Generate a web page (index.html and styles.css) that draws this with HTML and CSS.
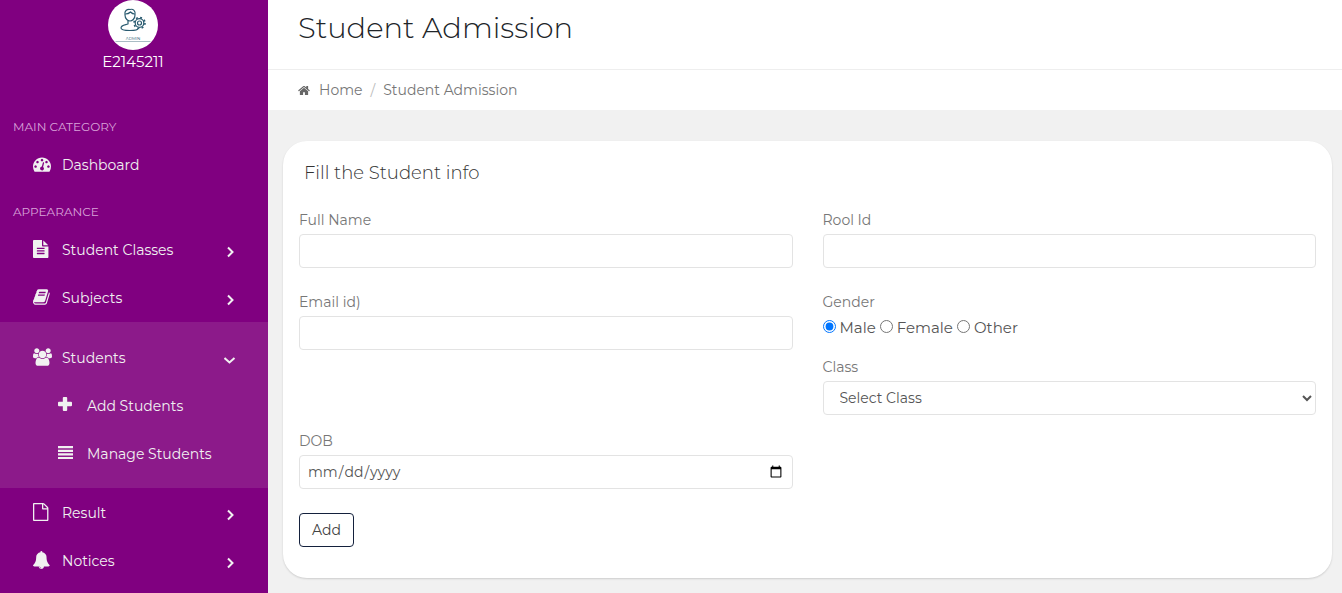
FILE: index.html
```html
<!DOCTYPE html>
<html lang="en">
<head>
<meta charset="utf-8">
<meta name="viewport" content="width=device-width, initial-scale=1">
<title>Student Admission</title>
<link rel="stylesheet" href="styles.css">
</head>
<body>
<div class="layout">
  <aside class="sidebar">
    <div class="profile">
      <svg class="avatar" viewBox="0 0 50 50" role="img" aria-label="Admin">
        <circle cx="25" cy="25" r="25" fill="#fff"/>
        <g fill="none" stroke="#2a5b70" stroke-width="1.2" stroke-linecap="round" stroke-linejoin="round">
          <path d="M17 15c-1-4 2-6 5-5.500 3-1 6 1.500 5 5.500 0 4-3 6-5 6s-5-2-5-6z"/>
          <path d="M17.500 14c2 0 4-1 5-2 1 1 2 2 4 2"/>
          <path d="M20 21v3c-3 1-7 1-7 4 0 2 4 2.500 9 2.500 4 0 8 0 8-2"/>
          <circle cx="31.500" cy="23" r="4.300"/>
          <circle cx="31.500" cy="23" r="2"/>
          <circle cx="31.500" cy="23" r="5.500" stroke-width="1.600" stroke-dasharray="1.900 2.420" stroke-linecap="butt"/>
        </g>
        <text class="avatar-text" x="25" y="40" text-anchor="middle">ADMIN</text>
        <path d="M7.500 41.500h35" stroke="#a9bcc4" stroke-width="1"/>
      </svg>
      <div class="profile-name">E2145211</div>
    </div>
    <nav class="menu" aria-label="Main">
      <h2 class="menu-title">MAIN CATEGORY</h2>
      <a class="item" href="#">
        <svg class="icon" viewBox="0 0 1792 1792"><path d="M384 1152q0-53-37.500-90.500t-90.500-37.500-90.500 37.500-37.500 90.500 37.500 90.500 90.500 37.500 90.500-37.500 37.500-90.500zm192-448q0-53-37.500-90.500t-90.500-37.500-90.500 37.500-37.500 90.500 37.500 90.500 90.500 37.500 90.500-37.500 37.500-90.500zm428 481l101-382q6-26-7.500-48.500t-38.500-29.500-48 6.500-30 39.500l-101 382q-60 5-107 43.500t-63 98.500q-20 77 20 146t117 89 146-20 89-117q16-60-6-117t-72-91zm660-33q0-53-37.500-90.500t-90.500-37.500-90.500 37.500-37.500 90.500 37.500 90.500 90.500 37.500 90.500-37.500 37.500-90.500zm-640-640q0-53-37.500-90.500t-90.500-37.500-90.500 37.500-37.500 90.500 37.500 90.500 90.500 37.500 90.500-37.500 37.500-90.500zm448 192q0-53-37.500-90.500t-90.500-37.500-90.500 37.500-37.500 90.500 37.500 90.500 90.500 37.500 90.500-37.500 37.500-90.500zm320 448q0 261-141 483-19 29-54 29h-1402q-35 0-54-29-141-221-141-483 0-182 71-348t191-286 286-191 348-71 348 71 286 191 191 286 71 348z"/></svg>
        <span>Dashboard</span>
      </a>
      <h2 class="menu-title">APPEARANCE</h2>
      <a class="item" href="#">
        <svg class="icon" viewBox="128 0 1792 1792"><path d="M1596 476q14 14 28 36h-472v-472q22 14 36 28zm-476 164h544v1056q0 40-28 68t-68 28h-1344q-40 0-68-28t-28-68v-1600q0-40 28-68t68-28h800v544q0 40 28 68t68 28zm160 736v-64q0-14-9-23t-23-9h-704q-14 0-23 9t-9 23v64q0 14 9 23t23 9h704q14 0 23-9t9-23zm0-256v-64q0-14-9-23t-23-9h-704q-14 0-23 9t-9 23v64q0 14 9 23t23 9h704q14 0 23-9t9-23zm0-256v-64q0-14-9-23t-23-9h-704q-14 0-23 9t-9 23v64q0 14 9 23t23 9h704q14 0 23-9t9-23z"/></svg>
        <span>Student Classes</span>
        <svg class="chevron" viewBox="0 0 12 12"><path d="M4 1.500 8.500 6 4 10.500"/></svg>
      </a>
      <a class="item" href="#">
        <svg class="icon" viewBox="64 0 1792 1792"><path d="M1703 478q40 57 18 129l-275 906q-19 64-76.500 107.500t-122.500 43.500h-923q-77 0-148.500-53.500t-99.500-131.500q-24-67-2-127 0-4 3-27t4-37q1-8-3-21.500t-3-19.500q2-11 8-21t16.500-23.500 16.500-23.500q23-38 45-91.500t30-91.500q3-10 .5-30t-.5-28q3-11 17-28t17-23q21-36 42-92t25-90q1-9-2.500-32t.5-28q4-13 22-30.500t22-22.500q19-26 42.500-84.500t27.500-96.500q1-8-3-25.500t-2-26.500q2-8 9-18t18-23 17-21q8-12 16.500-30.500t15-35 16-36 19.500-32 26.500-23.500 36-11.500 47.500 5.500l-1 3q38-9 51-9h761q74 0 114 56t18 130l-274 906q-36 119-71.500 153.500t-128.500 34.500h-869q-27 0-38 15-11 16-1 43 24 70 144 70h923q29 0 56-15.500t35-41.500l300-987q7-22 5-57 38 15 59 43zm-1064 2q-4 13 2 22.500t20 9.500h608q13 0 25.500-9.500t16.500-22.500l21-64q4-13-2-22.500t-20-9.500h-608q-13 0-25.500 9.500t-16.500 22.500zm-83 256q-4 13 2 22.500t20 9.500h608q13 0 25.500-9.500t16.500-22.500l21-64q4-13-2-22.500t-20-9.500h-608q-13 0-25.500 9.500t-16.500 22.500z"/></svg>
        <span>Subjects</span>
        <svg class="chevron" viewBox="0 0 12 12"><path d="M4 1.500 8.500 6 4 10.500"/></svg>
      </a>
      <div class="group">
        <a class="item" href="#">
          <svg class="icon icon-wide" viewBox="0 0 1920 1792"><path d="M593 896q-162 5-265 128h-134q-82 0-138-40.500t-56-118.500q0-353 124-353 6 0 43.500 21t97.500 42.500 119 21.500q67 0 133-23-5 37-5 66 0 139 81 256zm1071 637q0 120-73 189.500t-194 69.500h-874q-121 0-194-69.500t-73-189.500q0-53 3.500-103.500t14-109 26.500-108.500 43-97.500 62-81 85.500-53.500 111.500-20q10 0 43 21.500t73 48 107 48 135 21.500 135-21.500 107-48 73-48 43-21.500q61 0 111.500 20t85.500 53.500 62 81 43 97.500 26.500 108.500 14 109 3.500 103.500zm-1024-1277q0 106-75 181t-181 75-181-75-75-181 75-181 181-75 181 75 75 181zm704 384q0 159-112.500 271.500t-271.500 112.500-271.500-112.500-112.500-271.500 112.500-271.500 271.500-112.500 271.500 112.500 112.500 271.500zm576 225q0 78-56 118.500t-138 40.500h-134q-103-123-265-128 81-117 81-256 0-29-5-66 66 23 133 23 59 0 119-21.500t97.500-42.500 43.500-21q124 0 124 353zm-128-609q0 106-75 181t-181 75-181-75-75-181 75-181 181-75 181 75 75 181z"/></svg>
          <span>Students</span>
          <svg class="chevron" viewBox="0 0 12 12"><path d="M.5 4 5.500 8.500 10.500 4"/></svg>
        </a>
        <a class="item subitem" href="#">
          <svg class="icon" viewBox="0 0 18 18"><path d="M5.800 1h2.400q1 0 1 1v3.800H13q1 0 1 1v2.400q0 1-1 1H9.200V14q0 1-1 1H5.800q-1 0-1-1v-3.800H1q-1 0-1-1V6.800q0-1 1-1h3.800V2q0-1 1-1z"/></svg>
          <span>Add Students</span>
        </a>
        <a class="item subitem" href="#">
          <svg class="icon" viewBox="0 0 18 18"><path d="M0 2h15v2.200H0zM0 5.700h15v2.200H0zM0 9.300h15v2.200H0zM0 12.900h15v2.200H0z"/></svg>
          <span>Manage Students</span>
        </a>
      </div>
      <a class="item" href="#">
        <svg class="icon" viewBox="128 0 1792 1792"><path d="M1596 380q28 28 48 76t20 88v1152q0 40-28 68t-68 28h-1344q-40 0-68-28t-28-68v-1600q0-40 28-68t68-28h896q40 0 88 20t76 48zm-444-244v376h376q-10-29-22-41l-313-313q-12-12-41-22zm384 1528v-1024h-416q-40 0-68-28t-28-68v-416h-768v1536h1280z"/></svg>
        <span>Result</span>
        <svg class="chevron" viewBox="0 0 12 12"><path d="M4 1.500 8.500 6 4 10.500"/></svg>
      </a>
      <a class="item" href="#">
        <svg class="icon" viewBox="64 0 1792 1792"><path d="M912 1696q0-16-16-16-59 0-101.500-42.500t-42.500-101.500q0-16-16-16t-16 16q0 73 51.500 124.500t124.500 51.500q16 0 16-16zm816-288q0 52-38 90t-90 38h-448q0 106-75 181t-181 75-181-75-75-181h-448q-52 0-90-38t-38-90q50-42 91-88t85-119.500 74.500-158.500 50-206 19.500-260q0-152 117-282.500t307-158.500q-8-19-8-39 0-40 28-68t68-28 68 28 28 68q0 20-8 39 190 28 307 158.500t117 282.500q0 139 19.500 260t50 206 74.500 158.500 85 119.500 91 88z"/></svg>
        <span>Notices</span>
        <svg class="chevron" viewBox="0 0 12 12"><path d="M4 1.500 8.500 6 4 10.500"/></svg>
      </a>
    </nav>
  </aside>

  <main class="main">
    <header class="page-head">
      <h1 class="page-title">Student Admission</h1>
    </header>
    <nav class="crumbs" aria-label="Breadcrumb">
      <a class="crumb-home" href="#">
        <svg class="home-icon" viewBox="64 128 1664 1536"><path d="M1472 992v480q0 26-19 45t-45 19h-384v-384h-256v384h-384q-26 0-45-19t-19-45v-480q0-1 .5-3t.5-3l575-474 575 474q1 2 1 6zm223-69l-62 74q-8 9-21 11h-3q-13 0-21-7l-692-577-692 577q-12 8-24 7-13-2-21-11l-62-74q-8-10-7-23.500t11-21.500l719-599q32-26 76-26t76 26l244 204v-195q0-14 9-23t23-9h192q14 0 23 9t9 23v408l219 182q10 8 11 21.500t-7 23.500z"/></svg>
        <span>Home</span>
      </a>
      <span class="crumb-sep">/</span>
      <span>Student Admission</span>
    </nav>

    <section class="card">
      <h2 class="card-title">Fill the Student info</h2>
      <form>
        <div class="row">
          <div class="field">
            <label class="label" for="fullname">Full Name</label>
            <input class="control" id="fullname" type="text">
          </div>
          <div class="field">
            <label class="label" for="roll">Rool Id</label>
            <input class="control" id="roll" type="text">
          </div>
        </div>
        <div class="row row-tight">
          <div class="field">
            <label class="label" for="email">Email id)</label>
            <input class="control" id="email" type="email">
          </div>
          <div class="stack">
            <fieldset class="gender">
              <legend class="label">Gender</legend>
              <div class="options">
                <input class="radio" id="male" type="radio" name="gender" checked><label for="male">Male</label>
                <input class="radio" id="female" type="radio" name="gender"><label for="female">Female</label>
                <input class="radio" id="other" type="radio" name="gender"><label for="other">Other</label>
              </div>
            </fieldset>
            <div class="field">
              <label class="label" for="class">Class</label>
              <select class="control select" id="class"><option>Select Class</option></select>
            </div>
          </div>
        </div>
        <div class="row">
          <div class="field">
            <label class="label" for="dob">DOB</label>
            <input class="control date" id="dob" type="date">
          </div>
        </div>
        <button class="button" type="submit">Add</button>
      </form>
    </section>
  </main>
</div>
</body>
</html>
```
FILE: styles.css
```css
* {
  box-sizing: border-box;
}

body {
  margin: 0;
  background: #f1f1f1;
  color: #555;
  font-family: Montserrat, Inter, "Open Sans", sans-serif;
  font-size: 14px;
  line-height: 20px;
}

h1,
h2 {
  margin: 0;
}

a {
  color: inherit;
  text-decoration: none;
}

.layout {
  display: grid;
  grid-template-columns: 268px 1fr;
  min-height: 100vh;
}

/* Sidebar */
.sidebar {
  background: #800080;
  color: #f1f1f1;
}

.profile {
  display: flex;
  flex-direction: column;
  align-items: center;
  padding-right: 2px;
}

.avatar {
  width: 50px;
  height: 50px;
}

.avatar-text {
  font-size: 4px;
  fill: #2a5b70;
}

.profile-name {
  line-height: 24px;
  font-size: 15px;
  color: #fff;
}

.menu {
  padding-top: 30px;
}

.menu-title {
  margin: 14px 0 5px;
  padding-left: 13px;
  font-size: 12px;
  font-weight: 400;
  line-height: 18px;
  color: #d9a3d9;
}

.item {
  display: flex;
  align-items: center;
  padding: 14px 32px 14px 33px;
}

.icon {
  width: 18px;
  height: 18px;
  margin: 0 11px 2px 0;
  fill: currentColor;
}

.icon-wide {
  width: 19px;
  margin-right: 10px;
}

.chevron {
  width: 12px;
  height: 12px;
  margin: 3px 0 0 auto;
  fill: none;
  stroke: currentColor;
  stroke-width: 2;
}

.group {
  margin-bottom: 1px;
  padding: 12px 0 10px;
  background: #8c1a8a;
}

.subitem {
  padding-left: 58px;
}

/* Page header */
.page-head {
  padding: 8px 30px 21px;
  background: #fff;
  border-bottom: 1px solid #eee;
}

.page-title {
  font-size: 29px;
  font-weight: 300;
  line-height: 40px;
  color: #212529;
}

.crumbs {
  display: flex;
  gap: 8px;
  padding: 10px 30px;
  background: #fff;
  color: #777;
}

.crumb-home {
  display: flex;
  align-items: center;
  gap: 9px;
}

.home-icon {
  width: 12px;
  height: 11px;
  fill: #666;
}

.crumb-sep {
  color: #bbb;
}

/* Form card */
.card {
  margin: 31px 10px 15px 15px;
  padding: 18px 16px 31px;
  background: #fff;
  border-radius: 24px;
  box-shadow: 0 1px 2px rgba(0, 0, 0, 0.15);
}

.card-title {
  margin-bottom: 23px;
  padding-left: 5px;
  font-size: 18px;
  font-weight: 300;
  line-height: 28px;
  color: #333;
}

.row {
  display: grid;
  grid-template-columns: 1fr 1fr;
  column-gap: 30px;
  margin-bottom: 24px;
}

.row-tight {
  margin-bottom: 16px;
}

.field {
  display: flex;
  flex-direction: column;
  gap: 4px;
}

.label {
  padding: 0;
  color: #777;
}

.control {
  width: 100%;
  height: 34px;
  margin: 0;
  padding: 0 12px;
  border: 1px solid #e3e3e3;
  border-radius: 4px;
  background: #fff;
  color: #555;
  font: inherit;
}

.date {
  padding: 0 7px;
}

.stack {
  display: flex;
  flex-direction: column;
  gap: 19px;
}

.gender {
  margin: 0;
  padding: 0;
  border: 0;
}

.options {
  display: flex;
  align-items: center;
  gap: 4px;
  padding-top: 6px;
  font-size: 15px;
}

.radio {
  width: 13px;
  height: 13px;
  margin: 0 0 3px;
}

.button {
  height: 34px;
  padding: 0 12px;
  border: 1px solid #14213d;
  border-radius: 4px;
  background: #fff;
  color: #444;
  font: inherit;
}
```
